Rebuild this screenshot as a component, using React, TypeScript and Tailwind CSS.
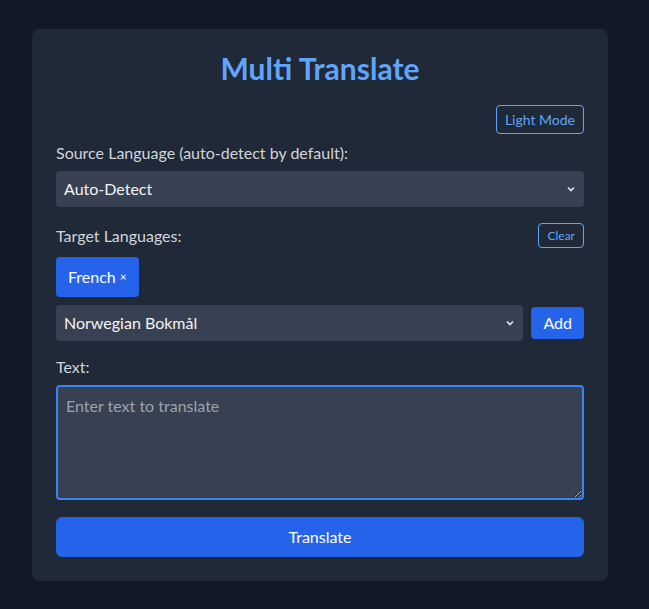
import React, { useState } from 'react'

const Chevron = () => (
  <svg
    className="pointer-events-none absolute right-2 top-1/2 -translate-y-1/2 w-[10px] h-[10px] text-gray-200"
    viewBox="0 0 10 10"
    fill="none"
    stroke="currentColor"
    strokeWidth="1.6"
  >
    <path d="M2 3.5 L5 6.5 L8 3.5" />
  </svg>
)

export default function App() {
  const [source, setSource] = useState('auto')
  const [pick, setPick] = useState('nb')
  const [text, setText] = useState('')

  return (
    <div
      className="min-h-[609px] bg-[#111827] pt-[29px] pb-[29px]"
      style={{ fontFamily: 'Lato, "Noto Sans", sans-serif' }}
    >
      <div className="ml-[32px] w-[576px] rounded-lg bg-[#1f2937] p-6">
        <h1 className="text-center text-[30px] leading-[36px] font-bold text-[#60a5fa] mt-[-3px]">
          Multi Translate
        </h1>

        <div className="mt-[19px] flex justify-end">
          <button className="rounded border border-[#60a5fa] px-2 h-[29px] text-sm text-[#60a5fa]">
            Light Mode
          </button>
        </div>

        <label className="mt-[7px] block text-base leading-6 text-[#d1d5db]">
          Source Language (auto-detect by default):
        </label>
        <div className="relative mt-[6px]">
          <select
            value={source}
            onChange={(e) => setSource(e.target.value)}
            className="w-full h-9 appearance-none rounded bg-[#374151] px-2 text-base text-gray-100 outline-none"
          >
            <option value="auto">Auto-Detect</option>
            <option value="en">English</option>
          </select>
          <Chevron />
        </div>

        <div className="mt-[16px] flex items-center justify-between">
          <span className="text-base text-[#d1d5db]">Target Languages:</span>
          <button className="rounded border border-[#60a5fa] px-2 h-[25px] text-xs text-[#60a5fa]">
            Clear
          </button>
        </div>

        <div className="mt-[9px] flex gap-2">
          <span className="inline-flex h-10 items-center rounded bg-[#2563eb] px-3 text-base text-white">
            French <span className="ml-1 text-xs">×</span>
          </span>
        </div>

        <div className="mt-2 flex items-center gap-2">
          <div className="relative flex-1">
            <select
              value={pick}
              onChange={(e) => setPick(e.target.value)}
              className="w-full h-9 appearance-none rounded bg-[#374151] px-2 text-base text-gray-100 outline-none"
            >
              <option value="nb">Norwegian Bokmål</option>
              <option value="de">German</option>
            </select>
            <Chevron />
          </div>
          <button className="h-8 rounded bg-[#2563eb] px-3 text-base text-white">Add</button>
        </div>

        <label className="mt-[14px] block text-base leading-6 text-[#d1d5db]">Text:</label>
        <textarea
          value={text}
          onChange={(e) => setText(e.target.value)}
          placeholder="Enter text to translate"
          className="mt-[6px] block w-full h-[115px] rounded border-2 border-[#3b82f6] bg-[#374151] px-2 py-[7px] text-base text-gray-100 placeholder-[#9ca3af] outline-none"
        />

        <button className="mt-[17px] w-full h-10 rounded-md bg-[#2563eb] text-base text-white">
          Translate
        </button>
      </div>
    </div>
  )
}
